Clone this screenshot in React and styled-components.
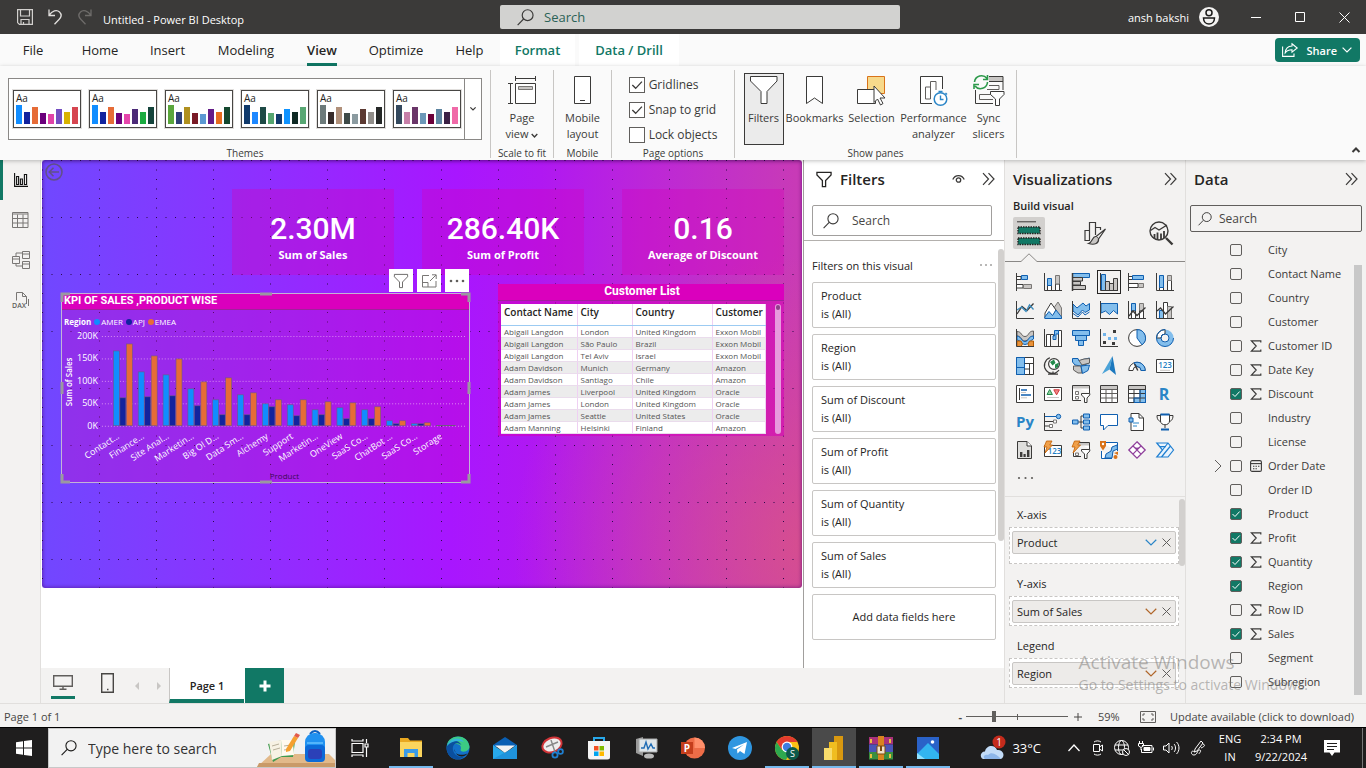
import React from "react";
import styled, { createGlobalStyle } from "styled-components";

const ink = "#3b3a39";
const green = "#117865";
const blue = "#83beec";
const deep = "#0f5fb0";
const grey = "#c8c6c4";

const Global = createGlobalStyle`
  *, *::before, *::after { box-sizing: border-box; }
  body { margin: 0; font-family: "Open Sans", "Noto Sans", sans-serif; font-size: 12px; color: #252423; background: #f3f2f1; }
  button, input { font: inherit; color: inherit; border: 0; background: none; padding: 0; margin: 0; border-radius: 0; }
  h1, h2, h3, p, ul { margin: 0; padding: 0; font: inherit; }
  li { list-style: none; }
  svg { display: block; flex: none; overflow: visible; }
`;

const Root = styled.div`
  display: flex;
  flex-direction: column;
  min-height: 100vh;
  position: relative;
  overflow: hidden;
`;

/* ---------- title bar ---------- */
const TitleBar = styled.header`
  display: grid;
  grid-template-columns: minmax(0, 500fr) 400px minmax(0, 466fr);
  align-items: center;
  height: 34px;
  background: #3b3a39;
  color: #fff;
`;
const QuickAccess = styled.div`
  display: flex;
  align-items: center;
  gap: 14px;
  padding-left: 17px;
`;
const DocTitle = styled.h1`
  font-size: 11px;
  line-height: 16px;
  padding-top: 6px;
  margin-left: -4px;
`;
const IconButton = styled.button`
  display: grid;
  place-items: center;
  width: ${(p) => p.$w || 16}px;
  height: ${(p) => p.$h || p.$w || 16}px;
  flex: none;
`;
const GlobalSearch = styled.label`
  display: flex;
  align-items: center;
  gap: 10px;
  height: 24px;
  padding-left: 17px;
  border-radius: 2px;
  background: #d2d2d0;
`;
const GlobalInput = styled.input`
  flex: 1;
  min-width: 0;
  outline: 0;
  font-size: 13px;
  &::placeholder { color: #2b6257; opacity: 1; }
`;
const WindowTools = styled.div`
  display: flex;
  justify-content: flex-end;
  align-items: center;
  font-size: 11px;
`;
const Account = styled.button`
  display: flex;
  align-items: center;
  gap: 10px;
  margin-right: 15px;
`;

/* ---------- ribbon ---------- */
const Tabs = styled.nav`
  display: flex;
  height: 32px;
  background: #fafafa;
`;
const Tab = styled.button`
  width: ${(p) => p.$w}px;
  margin-right: ${(p) => (p.$context ? 4 : 0)}px;
  font-size: 13px;
  line-height: 30px;
  color: ${(p) => (p.$context ? green : "#252423")};
  background: ${(p) => (p.$context ? "#fff" : "none")};
  font-weight: ${(p) => (p.$strong ? 600 : 400)};
`;
const TabText = styled.span`
  display: inline-block;
  height: 31px;
  border-bottom: 3px solid ${(p) => (p.$on ? green : "transparent")};
`;
const Share = styled.button`
  display: flex;
  align-items: center;
  gap: 8px;
  height: 24px;
  margin: 4px 6px 0 auto;
  padding: 0 8px 0 7px;
  border-radius: 4px;
  background: ${green};
  color: #fff;
  font-weight: 600;
  font-size: 11px;
`;
const ShareText = styled.span`
  display: flex;
  align-items: center;
  gap: 5px;
`;
const Ribbon = styled.section`
  display: flex;
  height: 94px;
  padding-top: 4px;
  background: #fafafa;
  box-shadow: 0 1px 4px rgba(0, 0, 0, 0.25);
  position: relative;
  z-index: 2;
`;
const Group = styled.div`
  display: flex;
  flex-direction: column;
  justify-content: space-between;
  align-items: center;
  width: ${(p) => p.$w}px;
  height: 88px;
  border-right: 1px solid #c8c6c4;
  padding: ${(p) => p.$pad || "3px 0 0"};
`;
const GroupName = styled.span`
  font-size: 10px;
  line-height: 10px;
  color: #3b3a39;
  white-space: nowrap;
`;
const Gallery = styled.div`
  display: flex;
  height: 62px;
  border: 1px solid #8a8886;
  background: #fff;
`;
const Thumbs = styled.div`
  display: flex;
  align-items: center;
  gap: 8px;
  padding: 0 3px 0 4px;
  border-right: 1px solid #8a8886;
`;
const Thumb = styled.button`
  display: flex;
  flex-direction: column;
  justify-content: space-between;
  width: 68px;
  height: 38px;
  padding: 1px 2px 3px;
  border: 1px solid #484644;
  outline: 1px solid #e1dfdd;
  background: #fff;
  font-size: 10px;
  line-height: 12px;
  text-align: left;
`;
const ThumbBars = styled.span`
  display: flex;
  align-items: flex-end;
  gap: 2px;
  height: 19px;
`;
const ThumbBar = styled.span`
  width: 6px;
  height: ${(p) => p.$h}px;
  background: ${(p) => p.$c};
`;
const RibbonRow = styled.div`
  display: flex;
  gap: 2px;
`;
const RibbonButton = styled.button`
  display: flex;
  flex-direction: column;
  align-items: center;
  gap: 3px;
  width: ${(p) => p.$w}px;
  height: 72px;
  padding-top: 1px;
  font-size: 11px;
  line-height: 16px;
  white-space: pre;
  color: #3b3a39;
  border: 1px solid ${(p) => (p.$on ? "#3b3a39" : "transparent")};
  background: ${(p) => (p.$on ? "#ebebeb" : "none")};
`;
const InlineCaret = styled.svg`
  display: inline-block;
  width: 7px;
  height: 5px;
`;
const Options = styled.div`
  display: flex;
  flex-direction: column;
  gap: 9px;
  padding-top: 4px;
`;
const Option = styled.label`
  display: flex;
  align-items: center;
  gap: 4px;
  font-size: 12px;
  line-height: 16px;
  white-space: nowrap;
  color: #3b3a39;
`;
const TickWrap = styled.span`
  display: grid;
  place-items: center;
  width: ${(p) => p.$s}px;
  height: ${(p) => p.$s}px;
  flex: none;
  & > * { grid-area: 1 / 1; }
  & > svg { pointer-events: none; }
`;
const TickInput = styled.input`
  appearance: none;
  width: ${(p) => p.$s}px;
  height: ${(p) => p.$s}px;
  border: 1px solid #605e5c;
  border-radius: ${(p) => (p.$solid ? 2 : 0)}px;
  background: ${(p) => (p.$solid ? "none" : "#fff")};
  &:checked { background: ${(p) => (p.$solid ? green : "#fff")}; }
`;
const Collapse = styled.div`
  display: flex;
  align-items: flex-end;
  margin-left: auto;
  padding: 0 3px 3px 0;
`;

function Tick({ id, on, size, solid }) {
  return (
    <TickWrap $s={size}>
      <TickInput type="checkbox" id={id} defaultChecked={on} $s={size} $solid={solid} />
      {on && (
        <svg width={size} height={size} viewBox="0 0 12 12" fill="none" stroke={solid ? "#fff" : ink} strokeWidth="1">
          <path d="M2.5 6 L5 8.5 L9.7 3.5" />
        </svg>
      )}
    </TickWrap>
  );
}

/* ---------- workspace ---------- */
const Work = styled.main`
  display: flex;
  flex: 1;
  min-height: 0;
`;
const Rail = styled.nav`
  display: flex;
  flex-direction: column;
  width: 41px;
  flex: none;
  border-right: 1px solid #e1dfdd;
`;
const RailButton = styled.button`
  display: grid;
  place-items: center;
  height: 40px;
  border-left: 3px solid ${(p) => (p.$on ? green : "transparent")};
  padding-right: 2px;
`;
const Center = styled.div`
  display: flex;
  flex-direction: column;
  flex: 1;
  min-width: 0;
`;
const Stage = styled.div`
  display: flex;
  flex: 1;
  background: #fff;
`;
const CanvasArea = styled.div`
  flex: 1;
  min-width: 0;
  padding: 0 1px;
`;
const Page = styled.div`
  position: relative;
  height: 428px;
  overflow: hidden;
  border-radius: 3px;
  background:
    radial-gradient(circle at 100% 90%, rgba(222, 90, 120, 0.6) 0%, rgba(222, 90, 120, 0) 34%),
    linear-gradient(91deg, #7048ff 0%, #8339ff 18%, #9628ff 36%, #a816ff 54%, #b018f2 65%, #bd28d6 80%, #c93cb4 100%);
  box-shadow: inset 0 0 4px rgba(70, 0, 110, 0.7);
`;
const GridDots = styled.svg`
  position: absolute;
  inset: 0;
  width: 100%;
  height: 100%;
`;
const BackButton = styled.button`
  position: absolute;
  left: 3px;
  top: 3px;
`;
const Visual = styled.section`
  position: absolute;
  left: ${(p) => p.$x}px;
  top: ${(p) => p.$y}px;
  width: ${(p) => p.$w}px;
  height: ${(p) => p.$h}px;
  background: ${(p) => p.$bg};
`;
const Kpi = styled(Visual)`
  display: flex;
  flex-direction: column;
  align-items: center;
  padding-top: 21px;
  color: #fff;
`;
const KpiValue = styled.span`
  font: 500 30px/37px Roboto, sans-serif;
`;
const KpiName = styled.span`
  font-size: 11px;
  font-weight: 700;
  line-height: 15px;
`;
const VisualTitle = styled.h2`
  height: ${(p) => p.$h}px;
  padding-left: 2px;
  background: #da00bd;
  border-bottom: 1px solid #a0219c;
  color: #fff;
  font: 700 ${(p) => p.$s}px/14px Roboto, sans-serif;
  text-align: ${(p) => p.$align || "left"};
`;
const ChartFrame = styled(Visual)`
  border: 1px solid #c3b3d6;
`;
const LegendRow = styled.div`
  display: flex;
  align-items: center;
  gap: 3px;
  height: 18px;
  padding: 5px 0 0 2px;
  color: #fff;
  font-size: 8px;
  line-height: 12px;
`;
const LegendItem = styled.span`
  display: flex;
  align-items: center;
  gap: 1px;
  &::before {
    content: "";
    width: 6px;
    height: 6px;
    border-radius: 50%;
    background: ${(p) => p.$c};
  }
`;
const Handles = styled.svg`
  position: absolute;
  left: -2px;
  top: -2px;
`;
const VisualTools = styled.div`
  position: absolute;
  left: 347px;
  top: 109px;
  display: flex;
  gap: 4px;
`;
const VisualTool = styled.button`
  display: grid;
  place-items: center;
  width: 24px;
  height: 23px;
  background: #fff;
`;
const TableBody = styled.div`
  display: flex;
  gap: 9px;
  padding: 3px 3px 0;
`;
const CustomerTable = styled.table`
  width: 264px;
  table-layout: fixed;
  border-collapse: collapse;
  background: #fff;
  th, td {
    padding: 0 0 0 3px;
    text-align: left;
    white-space: nowrap;
    overflow: hidden;
    border-right: 1px solid #efd0f3;
  }
  th {
    height: 21px;
    font-size: 10px;
    font-weight: 600;
    line-height: 17px;
    vertical-align: top;
    border-bottom: 1px solid #9ccbf2;
  }
  td {
    height: 12px;
    font-size: 8px;
    line-height: 11px;
    color: #555;
    border-bottom: 1px solid #eadcec;
  }
  tbody tr:nth-child(even) { background: #ececec; }
`;
const TableScroll = styled.div`
  width: 6px;
  height: 130px;
  border-radius: 3px;
  background: #e79add;
  &::before {
    content: "";
    display: block;
    width: 4px;
    height: 5px;
    margin: 1px;
    border-radius: 2px;
    background: #8f3f8b;
  }
`;

/* ---------- panes ---------- */
const FilterPane = styled.aside`
  width: 201px;
  flex: none;
  border-left: 1px solid #a19f9d;
  background: #fff;
`;
const PaneHead = styled.div`
  display: flex;
  align-items: center;
  gap: ${(p) => p.$gap || 0}px;
  height: 38px;
  padding: ${(p) => p.$pad};
`;
const PaneTitle = styled.h2`
  flex: 1;
  font-size: 15px;
  font-weight: 600;
  line-height: 20px;
`;
const PaneSearch = styled.label`
  display: flex;
  align-items: center;
  gap: ${(p) => p.$gap}px;
  height: ${(p) => p.$h}px;
  margin: ${(p) => p.$m};
  padding: 0 ${(p) => p.$px}px;
  border: 1px solid ${(p) => p.$c};
  border-radius: 2px;
`;
const PaneInput = styled.input`
  flex: 1;
  min-width: 0;
  outline: 0;
  font-size: 12px;
  &::placeholder { color: #484644; opacity: 1; }
`;
const FilterBody = styled.div`
  display: flex;
  justify-content: space-between;
  border-top: 1px solid #b3b0ad;
`;
const FilterList = styled.div`
  display: flex;
  flex-direction: column;
  flex: 1;
  gap: 6px;
  padding: 13px 2px 0 8px;
`;
const FilterHead = styled.div`
  display: flex;
  justify-content: space-between;
  align-items: center;
  height: 22px;
  padding-right: 3px;
  font-size: 11px;
`;
const FilterCard = styled.button`
  display: block;
  height: 46px;
  padding: 0 8px;
  border: 1px solid #c8c6c4;
  border-radius: 2px;
  background: #fff;
  text-align: ${(p) => (p.$center ? "center" : "left")};
  font-size: 11px;
  line-height: 18px;
`;
const Bar = styled.div`
  width: ${(p) => p.$w}px;
  height: ${(p) => p.$h}px;
  margin-top: ${(p) => p.$top}px;
  flex: none;
  border-radius: ${(p) => p.$r || 0}px;
  background: ${(p) => p.$c || "#d2d0ce"};
`;
const SidePane = styled.aside`
  display: flex;
  flex-direction: column;
  width: 181px;
  flex: none;
  border-left: 1px solid #e1dfdd;
`;
const Sub = styled.h3`
  padding-left: 8px;
  font-size: 11px;
  font-weight: 600;
  line-height: 16px;
`;
const Modes = styled.div`
  display: flex;
  justify-content: space-between;
  height: 35px;
  padding: 3px 8px 0;
`;
const Mode = styled.button`
  display: grid;
  place-items: center;
  width: 32px;
  height: 32px;
  border-radius: 2px;
  background: ${(p) => (p.$on ? "#d2d0ce" : "none")};
`;
const Notch = styled.div`
  display: flex;
  height: 13px;
  align-items: flex-end;
  &::before { content: ""; width: 16px; border-bottom: 1px solid #8a8886; }
  &::after { content: ""; flex: 1; border-bottom: 1px solid #8a8886; }
`;
const VisualGrid = styled.div`
  display: grid;
  grid-template-columns: repeat(6, 24px);
  grid-auto-rows: 24px;
  gap: 4px;
  padding: 8px 0 6px 8px;
`;
const VisualPick = styled.button`
  display: grid;
  place-items: center;
  border: 1px solid ${(p) => (p.$on ? "#252423" : "transparent")};
`;
const WellArea = styled.div`
  display: flex;
  flex: 1;
  border-top: 1px solid #e1dfdd;
`;
const Wells = styled.div`
  flex: 1;
  padding: 0 0 0 4px;
`;
const WellName = styled.h3`
  padding: ${(p) => p.$top}px 0 4px 8px;
  line-height: 17px;
  font-size: 11px;
`;
const Well = styled.div`
  height: ${(p) => p.$h}px;
  padding: 3px 2px;
  border: 1px dashed #c8c6c4;
  background: #fff;
`;
const Pill = styled.div`
  display: flex;
  align-items: center;
  gap: 3px;
  height: 23px;
  padding: 0 2px 0 4px;
  border: 1px solid #c8c6c4;
  border-radius: 2px;
  background: #edebe9;
  font-size: 11px;
  line-height: 20px;
`;
const PillText = styled.span`
  flex: 1;
`;
const DataBody = styled.div`
  display: flex;
  flex: 1;
  padding-right: 4px;
`;
const Fields = styled.ul`
  flex: 1;
  padding-top: 6px;
`;
const Field = styled.li`
  display: grid;
  grid-template-columns: 12px 12px 10px 1fr;
  column-gap: 8px;
  align-items: center;
  height: 24px;
  padding-left: 24px;
  color: #3b3a39;
`;
const Expander = styled.button`
  display: flex;
  justify-content: flex-end;
`;
const FieldName = styled.label`
  font-size: 11px;
  line-height: 16px;
  white-space: nowrap;
`;
const Watermark = styled.div`
  position: absolute;
  right: 58px;
  bottom: 74px;
  color: rgba(120, 118, 116, 0.5);
  font-size: 14px;
  line-height: 19px;
  pointer-events: none;
`;
const WatermarkHead = styled.p`
  font-size: 19px;
  line-height: 26px;
`;

/* ---------- page tabs and status ---------- */
const PageTabs = styled.div`
  display: flex;
  align-items: stretch;
  height: 35px;
  background: #f3f2f1;
`;
const ViewSwitch = styled.button`
  display: flex;
  flex-direction: column;
  align-items: center;
  justify-content: space-between;
  width: 24px;
  margin: 3px 0 4px ${(p) => p.$left}px;
  border-bottom: 3px solid ${(p) => (p.$on ? green : "transparent")};
`;
const PageArrows = styled.div`
  display: flex;
  align-items: center;
  gap: 16px;
  padding: 0 7px 0 14px;
`;
const PageTab = styled.button`
  width: 75px;
  padding-top: 4px;
  border-left: 1px solid #c8c6c4;
  border-bottom: 4px solid ${green};
  background: #fff;
  font-size: 11px;
  font-weight: 600;
`;
const AddPage = styled.button`
  display: grid;
  place-items: center;
  width: 40px;
  border-left: 1px solid #fff;
  background: ${green};
`;
const Status = styled.footer`
  display: flex;
  align-items: center;
  height: 25px;
  padding: 2px 4px 0;
  border-top: 1px solid #e1dfdd;
  border-bottom: 1px solid #000;
  font-size: 11px;
  color: #484644;
`;
const StatusRight = styled.div`
  display: flex;
  align-items: center;
  gap: 14px;
  margin-left: auto;
`;
const Zoom = styled.div`
  display: flex;
  align-items: center;
  gap: 4px;
`;
const ZoomValue = styled.output`
  width: 28px;
`;
const ZoomRange = styled.input`
  appearance: none;
  width: 102px;
  height: 12px;
  background: linear-gradient(#605e5c, #605e5c) 50% 50% / 1px 6px no-repeat,
    linear-gradient(#605e5c, #605e5c) 0 50% / 100% 1px no-repeat;
  &::-webkit-slider-thumb {
    appearance: none;
    width: 4px;
    height: 11px;
    background: #605e5c;
  }
`;
const StatusLink = styled.a`
  min-width: 192px;
  color: inherit;
  text-decoration: none;
`;

/* ---------- taskbar ---------- */
const Taskbar = styled.footer`
  display: flex;
  align-items: stretch;
  height: 40px;
  background: #1f1e1e;
  color: #fff;
`;
const Start = styled.button`
  display: grid;
  place-items: center;
  width: 48px;
`;
const TaskSearch = styled.label`
  display: flex;
  align-items: center;
  gap: 11px;
  width: 288px;
  padding-left: 12px;
  border: 1px solid #c8c8c8;
  background: #f2f2f2;
  color: #252423;
`;
const TaskInput = styled.input`
  flex: 1;
  min-width: 0;
  outline: 0;
  font-size: 14px;
  &::placeholder { color: #333; opacity: 1; }
`;
const Apps = styled.div`
  display: flex;
`;
const AppButton = styled.button`
  display: grid;
  place-items: center;
  width: ${(p) => p.$w || 44}px;
  margin: 0 ${(p) => (p.$w ? 4 : 2)}px 0 ${(p) => (p.$w ? 0 : 1)}px;
  padding-top: 2px;
  border-bottom: 2px solid ${(p) => (p.$run ? "#76b9ed" : "transparent")};
  background: ${(p) => (p.$on ? "#4a4a4a" : "none")};
`;
const Tray = styled.div`
  display: flex;
  align-items: center;
  gap: 8px;
  margin-left: auto;
`;
const Weather = styled.button`
  display: flex;
  align-items: center;
  gap: 6px;
  margin-right: 17px;
  font-size: 13px;
`;
const TrayText = styled.div`
  width: ${(p) => p.$w}px;
  font-size: 11px;
  line-height: 18px;
  text-align: center;
  white-space: nowrap;
`;
const ShowDesktop = styled.button`
  align-self: stretch;
  width: 4px;
  margin-left: 8px;
  border-left: 1px solid #777;
`;

/* ---------- shared glyphs ---------- */
const Lens = ({ s = 16, c = ink }) => (
  <svg width={s} height={s} viewBox="0 0 16 16" fill="none" stroke={c} strokeWidth="1.1">
    <circle cx="10" cy="5.8" r="5.1" />
    <path d="M6.2 9.4 L0.6 15.2" />
  </svg>
);
const Chevrons = () => (
  <svg width="13" height="14" viewBox="0 0 13 14" fill="none" stroke={ink} strokeWidth="1.2">
    <path d="M1 1.2 L6.5 7 L1 12.8 M6.5 1.2 L12 7 L6.5 12.8" />
  </svg>
);
const Down = ({ w = 10, c = ink, sw = 1.2 }) => (
  <svg width={w} height={w * 0.6} viewBox="0 0 10 6" fill="none" stroke={c} strokeWidth={sw}>
    <path d="M0.6 0.6 L5 5 L9.4 0.6" />
  </svg>
);
const Funnel = ({ w, h, c = ink, sw = 1, fill = "none" }) => (
  <svg width={w} height={h} viewBox="0 0 28 28" fill={fill} stroke={c} strokeWidth={sw}>
    <path d="M0.8 0.8 H27.2 V5.5 L17 16 V27.2 H11 V16 L0.8 5.5 Z" />
  </svg>
);
const Sigma = () => (
  <svg width="12" height="12" viewBox="0 0 12 12" fill="none" stroke={ink} strokeWidth="1.2">
    <path d="M10.8 2.6 V0.8 H1.4 L6.2 6 L1.4 11.2 H10.8 V9.4" />
  </svg>
);
const Dots = ({ w = 16, r = 1, c = "#605e5c" }) => (
  <svg width={w} height="4" viewBox={`0 0 ${w} 4`} fill={c}>
    <circle cx="2" cy="2" r={r} />
    <circle cx={w / 2} cy="2" r={r} />
    <circle cx={w - 2} cy="2" r={r} />
  </svg>
);

/* ---------- data ---------- */
const tabs = [
  ["File", 66], ["Home", 68], ["Insert", 67], ["Modeling", 90], ["View", 62, "on"],
  ["Optimize", 86], ["Help", 61], ["Format", 75, "ctx"], ["Data / Drill", 100, "ctx"],
];
const barHeights = [19, 12, 17, 11, 10, 15, 12, 17];
const themes = [
  ["#118dff", "#12239e", "#e66c37", "#6b007b", "#e044a7", "#744ec2", "#d9b300", "#d64550"],
  ["#118dff", "#12239e", "#e66c37", "#6b007b", "#e645ab", "#4c2a78", "#1aab40", "#15443c"],
  ["#5ba63c", "#2f3f78", "#b0901f", "#7a1a26", "#5b98d2", "#641c88", "#e66c1e", "#15482f"],
  ["#113a6b", "#1e88ff", "#1e4a45", "#56a56f", "#113a6b", "#0f93ff", "#0f2a24", "#58a773"],
  ["#6c7a7a", "#362b2a", "#b0907a", "#3e4a48", "#8b9ba0", "#5c3a32", "#918e8a", "#252827"],
  ["#34495e", "#c77fa8", "#6a3568", "#6c98b8", "#6b0038", "#5c84a0", "#3c2145", "#f06aa8"],
];
const products = ["Contact...", "Finance...", "Site Anal...", "Marketin...", "Big Ol D...", "Data Sm...", "Alchemy", "Support", "Marketin...", "OneView", "SaaS Co...", "ChatBot ...", "SaaS Co...", "Storage"];
const series = [
  { name: "AMER", color: "#118dff", v: [75, 54, 51, 37, 26, 31, 22, 21, 16, 18, 16, 5, 2, 0.4] },
  { name: "APJ", color: "#12239e", v: [28, 29, 30, 20, 11, 11, 19, 10, 11, 7, 7, 2, 2, 0.4] },
  { name: "EMEA", color: "#e66c37", v: [82, 70, 67, 44, 48, 33, 26, 26, 24, 23, 19, 5, 3, 0.4] },
];
const customers = [
  ["Abigail Langdon", "London", "United Kingdom", "Exxon Mobil"],
  ["Abigail Langdon", "São Paulo", "Brazil", "Exxon Mobil"],
  ["Abigail Langdon", "Tel Aviv", "Israel", "Exxon Mobil"],
  ["Adam Davidson", "Munich", "Germany", "Amazon"],
  ["Adam Davidson", "Santiago", "Chile", "Amazon"],
  ["Adam James", "Liverpool", "United Kingdom", "Oracle"],
  ["Adam James", "London", "United Kingdom", "Oracle"],
  ["Adam James", "Seattle", "United States", "Oracle"],
  ["Adam Manning", "Helsinki", "Finland", "Amazon"],
];
const filters = ["Product", "Region", "Sum of Discount", "Sum of Profit", "Sum of Quantity", "Sum of Sales"];
const fields = [
  ["City"], ["Contact Name"], ["Country"], ["Customer"], ["Customer ID", "sum"], ["Date Key", "sum"],
  ["Discount", "sum", true], ["Industry"], ["License"], ["Order Date", "date"], ["Order ID"], ["Product", "", true],
  ["Profit", "sum", true], ["Quantity", "sum", true], ["Region", "", true], ["Row ID", "sum"], ["Sales", "sum", true],
  ["Segment"], ["Subregion"],
];

const Axis = () => <path d="M0.5 0 V17.5 H18" fill="none" stroke={ink} />;
const W = "#fff";
const visuals = [
  ["Stacked bar chart", <><path d="M0.5 3.5 H5 V6.5 H0.5 M0.5 11.5 H7 V15 H0.5" fill={W} stroke={ink} /><path d="M5.5 2.5 H11.5 V6.5 H5.5 Z" fill={blue} stroke={deep} /><path d="M7.5 11.5 H15.5 V15.5 H7.5 Z" fill={grey} stroke="#797775" /><path d="M0.5 0 V18" stroke={ink} /></>],
  ["Stacked column chart", <><path d="M3.5 12 V17.5 H7.5 V12 Z M11.5 11 V17.5 H15.5 V11 Z" fill={W} stroke={ink} /><path d="M3.5 5.5 H7.5 V12.5 H3.5 Z" fill={blue} stroke={deep} /><path d="M11.5 2.5 H15.5 V11 H11.5 Z" fill={grey} stroke="#797775" /><Axis /></>],
  ["Clustered bar chart", <><path d="M0.5 0.5 H17.5 V4.5 H0.5 Z" fill={blue} stroke={deep} /><path d="M0.5 4.5 H10.5 V8 H0.5 Z M0.5 8.5 H8.5 V12 H0.5 Z M0.5 12.5 H13.5 V16.5 H0.5 Z" fill={grey} stroke={ink} /><path d="M0.5 0 V18" stroke={ink} strokeWidth="1.5" /></>],
  ["Clustered column chart", <><path d="M1.5 1.5 H5.5 V17.5 H1.5 Z" fill={blue} stroke={deep} /><path d="M5.5 8.5 H9.5 V17.5 H5.5 Z M9.5 10.5 H13.5 V17.5 H9.5 Z M13.5 5.5 H17.5 V17.5 H13.5 Z" fill={grey} stroke={ink} /><path d="M0.5 0 V17.5 H18" fill="none" stroke={ink} /></>],
  ["100% stacked bar chart", <><path d="M0.5 3.5 H5 V6.5 H0.5 M0.5 10.5 H10 V14.5 H0.5" fill={W} stroke={ink} /><path d="M4.5 2.5 H15.5 V6.5 H4.5 Z" fill={blue} stroke={deep} /><path d="M10.5 10.5 H15.5 V14.5 H10.5 Z" fill={grey} stroke="#797775" /><path d="M0.5 0 V18" stroke={ink} /></>],
  ["100% stacked column chart", <><path d="M3.5 12 V17.5 H7.5 V12 Z M11.5 7.5 V17.5 H15.5 V7.5 Z" fill={W} stroke={ink} /><path d="M3.5 2.5 H7.5 V14.5 H3.5 Z" fill={blue} stroke={deep} /><path d="M11.5 2.5 H15.5 V7.5 H11.5 Z" fill={grey} stroke="#797775" /><Axis /></>],
  ["Line chart", <><path d="M1 13 L6 5.5 L11 9.5 L17.5 2.5" fill="none" stroke={ink} strokeWidth="1.3" /><path d="M1 9 L5.5 6 L10 10.5 L13.5 4 L17.5 8.5" fill="none" stroke="#3a8bbd" strokeWidth="1.3" /><Axis /></>],
  ["Area chart", <><path d="M7 11 L14 1 L17.5 7 V17.5 H7 Z" fill={grey} stroke="#797775" /><path d="M1 12 L7 2 L12 9 L8 17 H1 Z" fill={W} stroke={ink} /><path d="M0.8 16 L5 10.5 L8.5 14.5 L12 9 L17.5 16 V17.5 H0.8 Z" fill={blue} stroke={deep} /></>],
  ["Stacked area chart", <><path d="M1 3 L5 7 L11 2 L14 5 L17.5 2.5 V9 L13 11.5 L10.5 9 L6 14 L1 10 Z" fill={blue} stroke={deep} /><path d="M1 12.5 L6 16 L10.5 11 L13 14 L17.5 11" fill="none" stroke={deep} /><Axis /></>],
  ["100% stacked area chart", <><path d="M1 2.5 H17.5 V13 L13.5 9.5 L9.5 13.5 L5.5 10 L1 12 Z" fill={blue} stroke={deep} /><Axis /></>],
  ["Line and stacked column chart", <><path d="M3.5 2.5 H7.5 V10 H3.5 Z" fill={blue} stroke={deep} /><path d="M11.5 2.5 H15.5 V10 H11.5 Z" fill={grey} stroke="#797775" /><path d="M3.5 10 H7.5 V17.5 H3.5 Z M11.5 10 H15.5 V17.5 H11.5 Z" fill={W} stroke={ink} /><path d="M1 15 L5 10 L9 14.5 L17.5 6.5" fill="none" stroke={ink} strokeWidth="1.3" /><Axis /></>],
  ["Line and clustered column chart", <><path d="M3.5 9.5 H7.5 V17.5 H3.5 Z" fill={blue} stroke={deep} /><path d="M7.5 1.5 H11.5 V17.5 H7.5 Z" fill={W} stroke={ink} /><path d="M11.5 5.5 H15.5 V17.5 H11.5 Z" fill={grey} stroke="#797775" /><path d="M1 10 L4.5 7 L9.5 13 L17.5 5.5" fill="none" stroke={ink} strokeWidth="1.3" /><Axis /></>],
  ["Ribbon chart", <><path d="M1 2.5 C6 2.5 5 7.5 9 7.5 C13 7.5 12 2 17.5 2 V7 C13 7 13 12 9 12 C5 12 6 7 1 7 Z" fill={grey} stroke="#605e5c" /><path d="M1 7 C6 8 5 12.5 9 12.5 C13 12.5 12 7 17.5 7 V10 C14 11 13 15.5 9 15.5 C5 15.5 5 11 1 11 Z" fill={blue} stroke={deep} /><path d="M1 12 H5 L6.5 15 L5 17.5 H1 Z M17.5 12 H13.5 L12 15 L13 17.5 H17.5 Z" fill="#e8923a" stroke="#b35a00" /><Axis /></>],
  ["Waterfall chart", <><path d="M2.5 5.5 H6.5 V17.5 H2.5 Z M14.5 1.5 H17.5 V17.5 H14.5 Z" fill={W} stroke={ink} /><path d="M6.5 5.5 H9.5 V10.5" fill="none" stroke={ink} /><path d="M10.5 1.5 H14.5 V5 H12 V10.5 H9 V7 H10.5 Z" fill={blue} stroke={deep} /><Axis /></>],
  ["Funnel", <><path d="M0.5 1.5 H17.5 V6.5 H0.5 Z M3.5 6.5 H14.5 V11.5 H3.5 Z M6.5 11.5 H11.5 V16.5 H6.5 Z" fill={blue} stroke={deep} /></>],
  ["Scatter chart", <><path d="M3 12 h3 v3 h-3 Z M13 1 h3 v3 h-3 Z M12 13 h3 v3 h-3 Z" fill={ink} /><path d="M3 4 h3 v3 h-3 Z M8 8 h3 v3 h-3 Z M14 8 h3 v3 h-3 Z" fill="#6fb3ea" /><Axis /></>],
  ["Pie chart", <><circle cx="9" cy="9" r="8.4" fill={W} stroke={ink} /><path d="M9 9 V0.6 A8.4 8.4 0 0 1 14 15.8 Z" fill={blue} stroke={deep} /></>],
  ["Donut chart", <><circle cx="9" cy="9" r="6.4" fill="none" stroke={blue} strokeWidth="4.4" /><path d="M9 0.6 A8.4 8.4 0 0 0 0.6 9 H5 A4 4 0 0 1 9 5 Z" fill={W} stroke={ink} /><circle cx="9" cy="9" r="8.5" fill="none" stroke={deep} strokeDasharray="40 14" /><circle cx="9" cy="9" r="4" fill="none" stroke={deep} /></>],
  ["Treemap", <><path d="M0.5 0.5 H17.5 V17.5 H0.5 Z" fill={W} stroke={ink} /><path d="M0.5 0.5 H8.5 V17.5 H0.5 Z" fill={blue} stroke={deep} /><path d="M0.5 10.5 H8.5" stroke={deep} /><path d="M8.5 6.5 H17.5 M13.5 6.5 V17.5 M8.5 12 H13.5" stroke={ink} fill="none" /></>],
  ["Map", <><circle cx="10" cy="7" r="5.4" fill={W} stroke={ink} strokeWidth="1.2" /><path d="M6 5 L10 2.5 L11.5 6 L8.5 8.5 Z M11 7.5 L15 5.5 L14 10 L11 11.5 Z" fill="#238a4b" /><path d="M6 0.8 A8 8 0 1 0 15 13 M9 14.5 V17 M4 17.2 H14" fill="none" stroke={ink} strokeWidth="1.2" /></>],
  ["Filled map", <><path d="M0.5 1.5 L6 1.5 L7 4 L11 2.5 L17.5 1 V6 L9 9 L3 8 L0.5 5 Z" fill={blue} stroke={deep} /><path d="M7 3.5 L12 2 L17.5 1.5 V6 L10 8 Z" fill={grey} stroke="#605e5c" /><path d="M1.5 9 L9 9 L10 16 L6 16 L1.5 13 Z" fill={grey} stroke="#605e5c" /><path d="M9 9 L17.5 8 L16 13.5 L10.5 16.5 Z" fill={blue} stroke={deep} /></>],
  ["Azure map", <><path d="M12.5 -1 L2 17 L9.5 12.5 Z" fill="#4ba3d8" /><path d="M12.5 -1 L9.5 12.5 L16 18 Z" fill="#1b78be" /></>],
  ["Gauge", <><path d="M0.8 13.5 A8.2 8.2 0 0 1 17.2 13.5 H13 A4 4 0 0 0 5 13.5 Z" fill={W} stroke={ink} /><path d="M6 5.8 A8.2 8.2 0 0 1 17.2 13.5 H13 A4 4 0 0 0 9 9.5 Z" fill={blue} stroke={deep} /><path d="M6.5 7 L9.8 13.5" stroke={ink} strokeWidth="1.5" /></>],
  ["Card", <><path d="M0.5 2.5 H17.5 V15.5 H0.5 Z" fill={W} stroke={ink} /><text x="9" y="11" fontSize="8" fontWeight="600" textAnchor="middle" fill="#1f7fc4">123</text><path d="M4 13.3 H14" stroke={grey} /></>],
  ["Multi-row card", <><path d="M0.5 0.5 H17.5 V17.5 H0.5 Z" fill={W} stroke={ink} /><path d="M3.5 3 V15" stroke={ink} /><path d="M5 5 H11 M5 10 H15" stroke={deep} strokeWidth="1.6" /><path d="M5 7.5 H10 M5 12.8 H11" stroke={grey} /></>],
  ["KPI", <><path d="M0.5 2.5 H17.5 V15.5 H0.5 Z" fill={W} stroke={ink} /><path d="M3 9.5 L5.7 4.5 L8.4 9.5 Z" fill="#8fd19e" stroke="#238a4b" /><path d="M9.8 4.8 H15.4 L12.6 9.8 Z" fill="#f08a8a" stroke="#d13438" /><path d="M3 12.5 H15" stroke={grey} /></>],
  ["Slicer", <><path d="M0.5 0.5 H17.5 V8 M9 15.5 H0.5 V0.5" fill={W} stroke={ink} /><path d="M1 1 H17 V3.5 H1 Z" fill={grey} /><path d="M3.5 6.5 h3 v3 h-3 Z M3.5 11.5 h3 v2.5 h-3 Z" fill="none" stroke="#797775" /><path d="M9.5 8.5 H17.8 V10 L15 13 V17.5 H12.5 V13 L9.5 10 Z" fill={W} stroke={ink} /></>],
  ["Table", <><path d="M0.5 0.5 H17.5 V17.5 H0.5 Z" fill={W} stroke={ink} /><path d="M1 1 H17 V4 H1 Z" fill={grey} /><path d="M0.5 4.5 H17.5 M0.5 8.5 H17.5 M0.5 13 H17.5 M6 4.5 V17.5 M12 4.5 V17.5" stroke="#605e5c" /></>],
  ["Matrix", <><path d="M0.5 0.5 H17.5 V17.5 H0.5 Z" fill={W} stroke={ink} /><path d="M1 1 H17 V4 H1 Z" fill={grey} /><path d="M12 5 H17 V17 H6 V13 H12 Z" fill={blue} /><path d="M0.5 4.5 H17.5 M0.5 8.5 H17.5 M0.5 13 H17.5 M6 4.5 V17.5 M12 4.5 V17.5" stroke={ink} /><path d="M12 5 V13 H6 V17 M17.5 5 V17.5 H6" stroke={deep} fill="none" /></>],
  ["R script visual", <text x="8" y="15" fontSize="16" fontWeight="700" textAnchor="middle" fill="#2a85c7">R</text>],
  ["Python visual", <text x="9" y="14" fontSize="15" fontWeight="700" textAnchor="middle" fill="#2a85c7">Py</text>],
  ["Key influencers", <><Axis /><path d="M1 3.5 H12 " stroke={deep} /><circle cx="14.5" cy="3.5" r="2.2" fill={blue} stroke={deep} /><path d="M1 8.5 H9 M1 13 H5" stroke={ink} /><path d="M9.5 7 h3 v3 h-3 Z M5.5 11.5 h3 v3 h-3 Z" fill={W} stroke="#797775" /></>],
  ["Decomposition tree", <><path d="M6 9 H11 M9 3 V15 M9 3 H11 M9 15 H11" stroke={ink} fill="none" /><path d="M0.5 7 H6 V11 H0.5 Z M11.5 1 H17.5 V5 H11.5 Z M11.5 7 H17.5 V11 H11.5 Z M11.5 13 H17.5 V17 H11.5 Z" fill={blue} stroke={deep} /></>],
  ["Q&A", <path d="M0.5 1.5 H17.5 V12.5 H8 L3.5 17 V12.5 H0.5 Z" fill={W} stroke={deep} />],
  ["Smart narrative", <><path d="M3 0.5 H11 L15.5 5 V17.5 H3 Z" fill={W} stroke={ink} /><path d="M11 0.5 V5 H15.5" fill="none" stroke={ink} /><path d="M5 10 H11 M5 13 H9" stroke="#2a85c7" /><path d="M1 5 h4 v4 h-4 Z" fill={blue} stroke={deep} /></>],
  ["Goals", <><path d="M4.5 1.5 H13.5 V8 C13.5 13 4.5 13 4.5 8 Z" fill={W} stroke={ink} /><path d="M4.5 2.5 H1 C1 7 3 8 4.7 8.5 M13.5 2.5 H17 C17 7 15 8 13.3 8.5 M9 12 V15" fill="none" stroke={ink} /><path d="M4.5 1.5 H13.5 M5 16.5 H13" stroke={deep} strokeWidth="2" /></>],
  ["Paginated report", <><path d="M1.5 0.5 H11 L15.5 5 V17.5 H1.5 Z" fill="#dededc" stroke={ink} /><path d="M11 0.5 V5 H15.5" fill={W} stroke={ink} /><path d="M4 11 h2.4 v5 h-2.4 Z M7.5 13 h2.2 v3 h-2.2 Z M11 9 h2.4 v7 h-2.4 Z" fill={ink} /></>],
  ["Card (new)", <><path d="M0.5 4.5 H17.5 V15.5 H0.5 Z" fill={W} stroke={ink} /><text x="10.5" y="13" fontSize="8" fontWeight="600" textAnchor="middle" fill="#1f7fc4">123</text><path d="M2.5 0 H8 L5.8 4 H8.5 L1 12 L3 6 H0 Z" fill="#f0a04a" stroke="#c25e00" strokeWidth="0.8" /></>],
  ["Slicer (new)", <><path d="M6 1.5 H17.5 V8 M9 15.5 H1.5 V12" fill={W} stroke={ink} /><path d="M7 2 H17 V4.5 H7 Z" fill={grey} /><path d="M3.5 12 h3 v2.5 h-3 Z" fill="none" stroke="#797775" /><path d="M9.5 8.5 H17.8 V10 L15 13 V17.5 H12.5 V13 L9.5 10 Z" fill={W} stroke={ink} /><path d="M2.5 0 H8 L5.8 4 H8.5 L1 12 L3 6 H0 Z" fill="#f0a04a" stroke="#c25e00" strokeWidth="0.8" /></>],
  ["ArcGIS Maps", <><path d="M1 1.5 H17.5 V10 M12 17.5 H1.5 V10" fill={W} stroke={deep} /><path d="M17 4 L12 6 L11 10 L6 13 L5 17 H12 L13 10 L17.5 8 Z" fill={blue} stroke={deep} /><path d="M0 0 H6 V5 L3 9.5 L0 5 Z" fill="#d9731a" /><circle cx="3" cy="3" r="1.2" fill={W} /><path d="M14 12 L18 10.5 V14 Z" fill="#d9731a" /><circle cx="15.5" cy="16" r="2" fill="#d9731a" /></>],
  ["Power Apps", <path d="M9 0.8 L17.2 9 L9 17.2 L0.8 9 Z M4.9 4.9 L13.1 13.1 M13.1 4.9 L4.9 13.1 M6 6 C8 8 10 8 12 6" fill={W} stroke="#8f3f9b" strokeWidth="1.3" />],
  ["Power Automate", <path d="M0.8 2 H12 L17.5 9 L12 16 H0.8 L6.5 9 Z M3.8 5.7 H10 M1 16 L12 2 M5.5 16 L14.5 5" fill="#eaf4fd" stroke="#1f7fd1" strokeWidth="1.2" />],
];

/* ---------- taskbar app drawings ---------- */
const apps = [
  ["File Explorer", true, <><path d="M1 2 H9 L11 4.5 H23 V21 H1 Z" fill="#e9a820" /><path d="M1 6 H23 V21 H1 Z" fill="#fbd55e" /><path d="M5 13 H19 V21 H15.5 V17 H8.5 V21 H5 Z" fill="#3b9be8" /></>],
  ["Edge", false, <><circle cx="12" cy="12" r="11.5" fill="#1371c9" /><path d="M1 9 C3 -2 22 -3 23.5 11 C23 16 15 17 14.5 14 C15.5 12 15 8 10.5 8 C5 8 1 11 1 9 Z" fill="#3ccb83" /><path d="M0.6 11 C2 4 12 2 15.5 9 C10 4.5 6 9 7 14 C8 19 13 22 18.5 20.5 C12 26 0.5 23 0.6 11 Z" fill="#0a4f9e" /><path d="M1 10 C3 2 14 0 18 6 C12 4 5 5 1 10 Z" fill="#35b6d8" /><path d="M8.5 13 C8 19 16 20 21.5 17.5 C18 22 10 22 8.5 13 Z" fill="#1f1e1e" /></>],
  ["Mail", false, <><path d="M0 9 L12 1 L24 9 V11 H0 Z" fill="#0a5fb3" /><path d="M0 9 L12 17 L24 9 V23 H0 Z" fill="#28a8ea" /><path d="M2 9.5 H22 L12 17 Z" fill="#f3f3f3" /><path d="M0 23 L24 10 V23 Z" fill="#1b8ad6" opacity=".7" /></>],
  ["Snipping Tool", false, <><ellipse cx="12" cy="9" rx="10" ry="7" fill="#eee" stroke="#d13438" strokeWidth="2" transform="rotate(-22 12 9)" /><path d="M6 11 L18 6 M11 4 L15 16" stroke="#888" strokeWidth="1.4" /><circle cx="15" cy="19" r="2.6" fill="none" stroke="#1f7fd1" strokeWidth="1.8" /><circle cx="20.5" cy="15.5" r="2.4" fill="none" stroke="#1f7fd1" strokeWidth="1.8" /></>],
  ["Store", false, <><path d="M7 6 V2 H17 V6" fill="none" stroke="#28a8ea" strokeWidth="2" /><path d="M1 5 H23 V21 Q23 23.5 20.5 23.5 H3.5 Q1 23.5 1 21 Z" fill="#f5f5f5" /><path d="M7 10 h4.5 v4.5 h-4.5 Z" fill="#f25022" /><path d="M12.5 10 h4.5 v4.5 h-4.5 Z" fill="#7fba00" /><path d="M7 15.5 h4.5 v4.5 h-4.5 Z" fill="#00a4ef" /><path d="M12.5 15.5 h4.5 v4.5 h-4.5 Z" fill="#ffb900" /></>],
  ["Performance Monitor", false, <><path d="M2 3 L9 1 V20 L2 17 Z" fill="#9a9a9a" /><path d="M5 3 H23 V16 H5 Z" fill="#dfe6ea" stroke="#aaa" /><path d="M7 12 L10 12 L12 6 L14 13 L17 8 L19 12 H21" fill="none" stroke="#1f6cb5" strokeWidth="1.4" /><ellipse cx="15" cy="20" rx="5" ry="2.6" fill="#bbb" /></>],
  ["PowerPoint", false, <><circle cx="13.5" cy="12" r="10.5" fill="#ed6c47" /><path d="M13.5 1.5 A10.5 10.5 0 0 1 24 12 H13.5 Z" fill="#ff8f6b" /><path d="M0 6 H12 V18 H0 Z" fill="#c43e1c" /><text x="6" y="16" fontSize="10" fontWeight="700" textAnchor="middle" fill="#fff">P</text></>],
  ["Telegram", false, <><circle cx="12" cy="12" r="12" fill="#2f96e0" /><path d="M4 12 L19 6 L16.5 18 L12 15 L9.5 17.5 L9 13.5 L16 8.5 L7.5 13 Z" fill="#fff" /></>],
  ["Chrome", true, <><circle cx="12" cy="12" r="12" fill="#fbc116" /><path d="M1.6 6 A12 12 0 0 1 22.4 6 H12 L7 14 Z" fill="#e33b2e" /><path d="M1.6 6 A12 12 0 0 0 11 24 L16 14 L12 15 L7 14 Z" fill="#2da94f" /><circle cx="12" cy="11" r="5.4" fill="#fff" /><circle cx="12" cy="11" r="4.2" fill="#3f7de0" /><circle cx="17.5" cy="17.5" r="6.5" fill="#0c5a4a" /><text x="17.5" y="21" fontSize="9" textAnchor="middle" fill="#fff">S</text></>],
  ["Power BI", true, <><path d="M12 0 H21 V24 H12 Z" fill="#d9980f" /><path d="M7 6 H15 V24 H7 Z" fill="#f0bd20" /><path d="M2 12 H10 V24 H2 Z" fill="#f8dc6c" /></>, true],
  ["WinRAR", true, <><path d="M0 1 H24 V8.5 H0 Z" fill="#a8327a" /><path d="M0 8.5 H24 V16 H0 Z" fill="#4a55b8" /><path d="M0 16 H24 V23.5 H0 Z" fill="#3a8f3f" /><path d="M9 0 H15 V24 H9 Z" fill="#d9841f" /><path d="M8 10 H16 V18 H8 Z" fill="#f0e0c8" stroke="#7a4a10" /><path d="M12 10 V15" stroke="#7a4a10" strokeWidth="2" /><path d="M2 3 V7 M21 3 V7 M2 18 V22 M21 18 V22" stroke="#e8c040" strokeWidth="2" /></>],
  ["Photos", true, <><path d="M1 1 H23 V23 H1 Z" fill="#2a62c8" /><path d="M1 23 V18 L12 7 L23 18 V23 Z" fill="#32b4f0" /><path d="M9 23 L1 17 V23 Z" fill="#8fe0ff" /><circle cx="16.5" cy="6" r="1.8" fill="#fff" /></>],
];

function SalesChart() {
  const base = 98;
  return (
    <svg width="100%" height="153" viewBox="0 0 408 153" preserveAspectRatio="xMinYMin meet" fill="#fff" fontSize="9">
      {["200K", "150K", "100K", "50K", "0K"].map((t, i) => (
        <g key={t}>
          <text x="36" y={11 + i * 22.5} textAnchor="end">{t}</text>
          <path d={`M40 ${8.5 + i * 22.5} H404`} stroke="#e9a8f5" strokeDasharray="1 2" opacity=".8" />
        </g>
      ))}
      <text transform="translate(10 54) rotate(-90)" textAnchor="middle" fontSize="8" fontWeight="600">Sum of Sales</text>
      {products.map((p, i) => (
        <g key={i}>
          {series.map((s, k) => (
            <rect key={s.name} x={51.5 + i * 24.9 + k * 6.5} y={base - s.v[i]} width="6" height={s.v[i]} fill={s.color} stroke="#6e5a80" strokeWidth=".6" />
          ))}
          <text transform={`translate(${58 + i * 24.9} 110) rotate(-33)`} textAnchor="end">{p}</text>
        </g>
      ))}
      <text x="223" y="151" textAnchor="middle" fontSize="8" fill="#3a0a55">Product</text>
    </svg>
  );
}

const kpis = [
  ["2.30M", "Sum of Sales", 190, 162],
  ["286.40K", "Sum of Profit", 380, 162],
  ["0.16", "Average of Discount", 580, 162],
];

const pageArrow = (d) => (
  <svg width="6" height="8" viewBox="0 0 6 8" fill="#c8c6c4"><path d={d} /></svg>
);

function FieldPill({ name, c }) {
  return (
    <Pill>
      <PillText>{name}</PillText>
      <IconButton $w={13} $h={16} aria-label={`${name} options`}><Down w={12} c={c} sw={1} /></IconButton>
      <IconButton $w={13} $h={16} aria-label={`Remove ${name}`}>
        <svg width="9" height="9" stroke="#605e5c"><path d="M0.5 0.5 L8.5 8.5 M8.5 0.5 L0.5 8.5" /></svg>
      </IconButton>
    </Pill>
  );
}

export default function App() {
  return (
    <>
      <Global />
      <Root>
        <TitleBar>
          <QuickAccess>
            <IconButton aria-label="Save">
              <svg width="16" height="16" viewBox="0 0 16 16" fill="none" stroke="#d2d0ce" strokeWidth="1.2">
                <path d="M0.6 0.6 H15.4 V15.4 H2.4 L0.6 13.6 Z M3.5 0.6 V7 H12.5 V0.6 M4 15.4 V10.5 H12 V15.4 M6.5 13 V15.4" />
              </svg>
            </IconButton>
            <IconButton aria-label="Undo">
              <svg width="16" height="16" viewBox="0 0 16 16" fill="none" stroke="#e1dfdd" strokeWidth="1.3">
                <path d="M2 0.5 V6.5 H8 M2.2 6.2 C5 1.5 10 0.5 12.5 3 C15 5.5 14 8.5 12 10.5 L7.5 15.3" />
              </svg>
            </IconButton>
            <IconButton aria-label="Redo">
              <svg width="16" height="16" viewBox="0 0 16 16" fill="none" stroke="#6e6c6a" strokeWidth="1.3">
                <path d="M14 0.5 V6.5 H8 M13.8 6.2 C11 1.5 6 0.5 3.5 3 C1 5.5 2 8.5 4 10.5 L8.5 15.3" />
              </svg>
            </IconButton>
            <DocTitle>Untitled - Power BI Desktop</DocTitle>
          </QuickAccess>
          <GlobalSearch>
            <Lens s={17} />
            <GlobalInput placeholder="Search" aria-label="Search" />
          </GlobalSearch>
          <WindowTools>
            <Account>
              ansh bakshi
              <svg width="20" height="20" viewBox="0 0 20 20">
                <circle cx="10" cy="10" r="10" fill="#f3f2f1" />
                <g fill="none" stroke="#1b1a19" strokeWidth="1.5">
                  <circle cx="10" cy="5.8" r="3" />
                  <path d="M4.5 11 H15.5 C15.5 19 4.5 19 4.5 11 Z" />
                </g>
              </svg>
            </Account>
            <IconButton $w={44} $h={34} aria-label="Minimize">
              <svg width="10" height="10" stroke="#fff"><path d="M0 5.5 H10" /></svg>
            </IconButton>
            <IconButton $w={44} $h={34} aria-label="Maximize">
              <svg width="10" height="10" fill="none" stroke="#fff"><path d="M0.5 0.5 H9.5 V9.5 H0.5 Z" /></svg>
            </IconButton>
            <IconButton $w={44} $h={34} aria-label="Close">
              <svg width="11" height="11" stroke="#fff"><path d="M0.5 0.5 L10.5 10.5 M10.5 0.5 L0.5 10.5" /></svg>
            </IconButton>
          </WindowTools>
        </TitleBar>

        <Tabs>
          {tabs.map(([t, w, kind]) => (
            <Tab key={t} $w={w} $strong={!!kind} $context={kind === "ctx"}>
              <TabText $on={kind === "on"}>{t}</TabText>
            </Tab>
          ))}
          <Share>
            <svg width="16" height="14" viewBox="0 0 16 14" fill="none" stroke="#fff" strokeWidth="1.1">
              <path d="M0.6 3.5 V13.4 H12 V10.5 M10 0.8 L15.2 5 L10 9.2 V6.8 C7 6.8 5 7.5 3.2 9.8 C3.5 6 6 3.2 10 3 Z" />
            </svg>
            <ShareText>Share <Down w={10} c="#fff" /></ShareText>
          </Share>
        </Tabs>

        <Ribbon>
          <Group $w={491} $pad="8px 0 0">
            <Gallery>
              <Thumbs>
                {themes.map((colors, i) => (
                  <Thumb key={i} aria-label={`Theme ${i + 1}`}>
                    Aa
                    <ThumbBars>
                      {colors.map((c, k) => <ThumbBar key={k} $h={barHeights[k]} $c={c} />)}
                    </ThumbBars>
                  </Thumb>
                ))}
              </Thumbs>
              <IconButton $w={16} $h={60} aria-label="More themes"><Down w={6} sw={2} /></IconButton>
            </Gallery>
            <GroupName>Themes</GroupName>
          </Group>
          <Group $w={63}>
            <RibbonButton $w={60}>
              <svg width="30" height="32" viewBox="0 0 30 32" fill="none" stroke={ink}>
                <path d="M8.5 3.5 H28.5 M8.5 1 V6 M28.5 1 V6 M3.5 8.5 V28.5 M1 8.5 H6 M1 28.5 H6" />
                <path d="M8.5 8.5 H28.5 V28.5 H8.5 Z" fill="#fff" />
                <path d="M11.5 11.5 H25.5 V14.5 H11.5 Z" fill={grey} stroke="#797775" />
              </svg>
              <span>{"Page\nview"} <InlineCaret viewBox="0 0 10 6" fill="none" stroke={ink} strokeWidth="2"><path d="M1 1 L5 5 L9 1" /></InlineCaret></span>
            </RibbonButton>
            <GroupName>Scale to fit</GroupName>
          </Group>
          <Group $w={58}>
            <RibbonButton $w={56}>
              <svg width="18" height="32" viewBox="0 0 18 32" fill="#fff" stroke={ink}>
                <path d="M0.5 1.5 H16.5 V28.5 H0.5 Z M6 25.5 H11" />
              </svg>
              <span>{"Mobile\nlayout"}</span>
            </RibbonButton>
            <GroupName>Mobile</GroupName>
          </Group>
          <Group $w={123}>
            <Options>
              <Option><Tick id="gridlines" on size={16} />Gridlines</Option>
              <Option><Tick id="snap" on size={16} />Snap to grid</Option>
              <Option><Tick id="lock" size={16} />Lock objects</Option>
            </Options>
            <GroupName>Page options</GroupName>
          </Group>
          <Group $w={282}>
            <RibbonRow>
              <RibbonButton $w={40} $on>
                <svg width="28" height="32" viewBox="0 0 28 32" fill="#fff" stroke={ink}>
                  <path d="M0.5 1.5 H27 V6 L17 16.5 V28.5 H11 V16.5 L0.5 6 Z" />
                </svg>
                <span>Filters</span>
              </RibbonButton>
              <RibbonButton $w={58}>
                <svg width="18" height="32" viewBox="0 0 18 32" fill="#fff" stroke={ink}>
                  <path d="M0.5 1.5 H16.5 V28.5 L8.5 23 L0.5 28.5 Z" />
                </svg>
                <span>Bookmarks</span>
              </RibbonButton>
              <RibbonButton $w={52}>
                <svg width="30" height="32" viewBox="0 0 30 32">
                  <path d="M10.5 1.5 H27.5 V18.5 H10.5 Z" fill="#f7d98b" stroke="#d9731a" />
                  <path d="M0.5 14.5 H18.5 V28.5 H0.5 Z" fill="#fff" stroke={ink} />
                  <path d="M17 11 V27.5 L20.5 24 L23.5 30 L26 28.5 L23 23 H28 Z" fill="#fff" stroke={ink} />
                </svg>
                <span>Selection</span>
              </RibbonButton>
              <RibbonButton $w={68}>
                <svg width="28" height="32" viewBox="0 0 28 32" fill="none" stroke={ink}>
                  <path d="M12 28.5 H0.5 V1.5 H22.5 V14" fill="#fff" />
                  <path d="M5.5 24 V12 H10.5 V24 Z M10.5 24 V6.5 H16 V15" stroke="#605e5c" />
                  <circle cx="20.5" cy="24" r="6.3" fill="#fff" stroke="#2a85c7" strokeWidth="1.5" />
                  <path d="M20.5 20.5 V24.5 H23.5 M18.5 16.5 H22.5 M25.5 18 L27 19.5" stroke="#2a85c7" strokeWidth="1.4" />
                </svg>
                <span>{"Performance\nanalyzer"}</span>
              </RibbonButton>
              <RibbonButton $w={38}>
                <svg width="32" height="32" viewBox="0 0 32 32" fill="none" stroke={ink}>
                  <path d="M16 2 H30 V6 H16 Z" fill={grey} stroke="none" />
                  <path d="M16 1.5 H30 V15 M2.5 15 V28.5 H20 M16 6.5 H30" />
                  <path d="M16 10.5 H26 V14.5 H14 M18 19.5 H6.5 V24.5 H20" stroke="#605e5c" />
                  <path d="M1.5 7 A7 7 0 0 1 14 3.5 M14.5 7 A7 7 0 0 1 2 11 M14.5 0 V4.5 H10 M1 14 V9.5 H6" stroke="#2d9a4b" strokeWidth="1.6" />
                  <path d="M17.5 16.5 H31 V19.5 L26.5 24 V30.5 H22.5 V24 L17.5 19.5 Z" fill="#fff" />
                </svg>
                <span>{"Sync\nslicers"}</span>
              </RibbonButton>
            </RibbonRow>
            <GroupName>Show panes</GroupName>
          </Group>
          <Collapse>
            <IconButton $w={14} aria-label="Collapse ribbon">
              <svg width="8" height="6" viewBox="0 0 8 6" fill="none" stroke={ink} strokeWidth="2"><path d="M0.5 5 L4 1.5 L7.5 5" /></svg>
            </IconButton>
          </Collapse>
        </Ribbon>

        <Work>
          <Rail>
            <RailButton $on aria-label="Report view">
              <svg width="14" height="14" viewBox="0 0 14 14" fill="none" stroke="#111" strokeWidth="1.1">
                <path d="M0.6 0 V13.4 H14 M2.6 11.5 V3.5 H4.6 V11.5 Z M6.4 11.5 V6 H8.4 V11.5 Z M10.4 11.5 V1.5 H12.6 V11.5 Z" />
              </svg>
            </RailButton>
            <RailButton aria-label="Table view">
              <svg width="17" height="16" viewBox="0 0 17 16" fill="none" stroke="#797775">
                <path d="M0.5 0.5 H16 V15.5 H0.5 Z M0.5 2 H16 M0.5 6.5 H16 M0.5 11 H16 M5.5 2.5 V15.5 M11 2.5 V15.5" />
              </svg>
            </RailButton>
            <RailButton aria-label="Model view">
              <svg width="18" height="18" viewBox="0 0 18 18" fill="none" stroke="#797775">
                <path d="M10.5 0.5 H17.5 V7.5 H10.5 Z M10.5 3 H17.5 M0.5 5.5 H7.5 V12.5 H0.5 Z M0.5 8 H7.5 M10.5 10.5 H17.5 V17.5 H10.5 Z M10.5 13 H17.5 M4 5.5 V2 H10.5 M4 12.5 V15 H10.5" />
              </svg>
            </RailButton>
            <RailButton aria-label="DAX query view">
              <svg width="18" height="17" viewBox="0 0 18 17" fill="none" stroke="#797775">
                <path d="M4.5 8.5 V0.5 H10.5 L14.5 4.5 V12 M10.5 0.5 V4.5 H14.5 M16.5 7 V14" />
                <text x="0" y="16" fontSize="7" fontWeight="600" fill="#605e5c" stroke="none">DAX</text>
              </svg>
            </RailButton>
          </Rail>

          <Center>
            <Stage>
              <CanvasArea>
                <Page>
                  <GridDots>
                    <defs>
                      <pattern id="dots" width="57" height="57" patternUnits="userSpaceOnUse">
                        <path d="M0 0.5 H57 M0.5 0 V57" stroke="#2a0a4a" strokeDasharray="1 8.5" />
                      </pattern>
                    </defs>
                    <rect width="100%" height="100%" fill="url(#dots)" />
                  </GridDots>
                  <BackButton aria-label="Back">
                    <svg width="18" height="18" viewBox="0 0 18 18" fill="none" stroke="#62508a" strokeWidth="1.6">
                      <circle cx="9" cy="9" r="8" />
                      <path d="M14 9 H4.5 M8.5 4.8 L4.3 9 L8.5 13.2" />
                    </svg>
                  </BackButton>
                  {kpis.map(([v, n, x, w]) => (
                    <Kpi key={n} $x={x} $y={29} $w={w} $h={86} $bg="rgba(214,0,184,0.34)">
                      <KpiValue>{v}</KpiValue>
                      <KpiName>{n}</KpiName>
                    </Kpi>
                  ))}
                  <VisualTools>
                    <VisualTool aria-label="Filters on visual"><Funnel w={16} h={14} c="#605e5c" sw={1.8} /></VisualTool>
                    <VisualTool aria-label="Focus mode">
                      <svg width="15" height="14" viewBox="0 0 15 14" fill="none" stroke="#797775">
                        <path d="M7 1.5 H0.5 V13 H14 V7 M0.5 8.5 H6 V13 M8 7 L14 1 M10 0.8 H14.2 V5" />
                      </svg>
                    </VisualTool>
                    <VisualTool aria-label="More options"><Dots w={16} r={1.3} /></VisualTool>
                  </VisualTools>
                  <ChartFrame $x={19} $y={133} $w={409} $h={190} $bg="rgba(214,0,184,0.28)">
                    <VisualTitle $h={16} $s={11}>KPI OF SALES ,PRODUCT WISE</VisualTitle>
                    <LegendRow>
                      <b>Region</b>
                      {series.map((s) => <LegendItem key={s.name} $c={s.color}>{s.name}</LegendItem>)}
                    </LegendRow>
                    <SalesChart />
                    <Handles width="411" height="192" viewBox="0 0 411 192" fill="none" stroke="#9b98a0" strokeWidth="3">
                      <path d="M2 10 V2 H10 M401 2 H409 V10 M2 182 V190 H10 M401 190 H409 V182 M200 2 H212 M200 190 H212 M2 90 V102 M409 90 V102" />
                    </Handles>
                  </ChartFrame>
                  <Visual $x={456} $y={124} $w={286} $h={152} $bg="rgba(214,0,184,0.55)">
                    <VisualTitle $h={17} $s={12} $align="center">Customer List</VisualTitle>
                    <TableBody>
                      <CustomerTable>
                        <colgroup><col width="76" /><col width="55" /><col width="80" /><col width="53" /></colgroup>
                        <thead>
                          <tr><th>Contact Name</th><th>City</th><th>Country</th><th>Customer</th></tr>
                        </thead>
                        <tbody>
                          {customers.map((r, i) => <tr key={i}>{r.map((c, k) => <td key={k}>{c}</td>)}</tr>)}
                        </tbody>
                      </CustomerTable>
                      <TableScroll />
                    </TableBody>
                  </Visual>
                </Page>
              </CanvasArea>

              <FilterPane>
                <PaneHead $gap={8} $pad="0 1px 0 12px">
                  <Funnel w={16} h={15} c="#252423" sw={2.4} />
                  <PaneTitle>Filters</PaneTitle>
                  <svg width="13" height="10" viewBox="0 0 13 10" fill="none" stroke={ink} strokeWidth="1.3">
                    <path d="M0.8 5.5 C3 0.2 10 0.2 12.2 5.5" /><circle cx="6.5" cy="6" r="2.2" />
                  </svg>
                  <IconButton $w={30} $h={16} aria-label="Collapse filters"><Chevrons /></IconButton>
                </PaneHead>
                <PaneSearch $h={31} $gap={13} $px={10} $m="7px 12px 4px 8px" $c="#a19f9d">
                  <Lens s={16} />
                  <PaneInput placeholder="Search" aria-label="Search filters" />
                </PaneSearch>
                <FilterBody>
                  <FilterList>
                    <FilterHead>Filters on this visual <Dots w={14} r={0.8} /></FilterHead>
                    {filters.map((f) => <FilterCard key={f}>{f}<br />is (All)</FilterCard>)}
                    <FilterCard $center>Add data fields here</FilterCard>
                  </FilterList>
                  <Bar $w={6} $h={292} $top={8} $r={3} />
                </FilterBody>
              </FilterPane>
            </Stage>
            <PageTabs>
              <ViewSwitch $on $left={10} aria-label="Desktop layout">
                <svg width="20" height="20" viewBox="0 0 20 20" fill="none" stroke="#605e5c" strokeWidth="1.4">
                  <path d="M0.7 4.7 H19.3 V15.3 H0.7 Z M10 15.3 V18.3 M6.5 18.3 H13.5" />
                </svg>
              </ViewSwitch>
              <ViewSwitch $left={21} aria-label="Mobile layout">
                <svg width="14" height="22" viewBox="0 0 14 22" fill="none" stroke="#484644" strokeWidth="1.4">
                  <path d="M0.7 2.7 H12.3 V21.3 H0.7 Z M6 18.5 H7.5" />
                </svg>
              </ViewSwitch>
              <PageArrows>{pageArrow("M5 0 V8 L1 4 Z")}{pageArrow("M1 0 V8 L5 4 Z")}</PageArrows>
              <PageTab>Page 1</PageTab>
              <AddPage aria-label="New page">
                <svg width="12" height="12" stroke="#fff" strokeWidth="3"><path d="M6 0.5 V11.5 M0.5 6 H11.5" /></svg>
              </AddPage>
            </PageTabs>
          </Center>

          <SidePane>
            <PaneHead $pad="0 8px">
              <PaneTitle>Visualizations</PaneTitle>
              <Chevrons />
            </PaneHead>
            <Sub>Build visual</Sub>
            <Modes>
              <Mode $on aria-label="Build visual">
                <svg width="24" height="24" viewBox="0 0 24 24">
                  <path d="M0 0.8 H19" stroke={ink} />
                  <path d="M1 6 H23 V12.5 H1 Z M1 17 H23 V23.5 H1 Z" fill={green} stroke="#252423" strokeWidth="1.4" strokeDasharray="1.5 1" />
                </svg>
              </Mode>
              <Mode aria-label="Format visual">
                <svg width="24" height="24" viewBox="0 0 24 24" fill="none" stroke={ink} strokeWidth="1.2">
                  <path d="M7 19.5 H2 V9.5 H6.5 V19 M6.5 9.5 V1.5 H12.5 V14 M12.5 6.5 H17.5 V9" />
                  <path d="M22.5 8 L13 15.5 L15.5 18 Z" fill="#f3f2f1" />
                  <path d="M13 15.5 C9 15 10 21 5.5 22.5 C12 24.5 16 22 15.5 18" fill="#c8c6c4" />
                </svg>
              </Mode>
              <Mode aria-label="Analytics">
                <svg width="24" height="24" viewBox="0 0 24 24" fill="none" stroke={ink} strokeWidth="1.4">
                  <circle cx="10" cy="10" r="9" />
                  <path d="M1.5 9.5 L6 6.5 L10 9 L18 4" /><path d="M5.5 18 V13 M8.5 19 V11.5 M12 19 V12.5 M15 17 V10" strokeWidth="1.8" />
                  <path d="M17 17 L23.5 23.5" strokeWidth="2.4" />
                </svg>
              </Mode>
            </Modes>
            <Notch>
              <svg width="16" height="9" viewBox="0 0 16 9" fill="none" stroke="#8a8886"><path d="M0 8.5 L8 0.8 L16 8.5" /></svg>
            </Notch>
            <VisualGrid>
              {visuals.map(([name, art]) => (
                <VisualPick key={name} aria-label={name} $on={name === "Clustered column chart"}>
                  <svg width="18" height="18" viewBox="0 0 18 18">{art}</svg>
                </VisualPick>
              ))}
              <VisualPick aria-label="Get more visuals"><Dots w={17} r={1.1} /></VisualPick>
            </VisualGrid>
            <WellArea>
              <Wells>
                <WellName $top={9}>X-axis</WellName>
                <Well $h={37}><FieldPill name="Product" c="#2a85c7" /></Well>
                <WellName $top={11}>Y-axis</WellName>
                <Well $h={30}><FieldPill name="Sum of Sales" c="#b0662a" /></Well>
                <WellName $top={11}>Legend</WellName>
                <Well $h={30}><FieldPill name="Region" c="#b0662a" /></Well>
              </Wells>
              <Bar $w={6} $h={67} $top={2} $r={3} />
            </WellArea>
          </SidePane>

          <SidePane>
            <PaneHead $pad="0 8px">
              <PaneTitle>Data</PaneTitle>
              <Chevrons />
            </PaneHead>
            <PaneSearch $h={27} $gap={7} $px={7} $m="7px 4px 0" $c="#605e5c">
              <Lens s={14} />
              <PaneInput placeholder="Search" aria-label="Search data" />
            </PaneSearch>
            <DataBody>
              <Fields>
                {fields.map(([name, kind, on]) => (
                  <Field key={name}>
                    {kind === "date" ? (
                      <Expander aria-label={`Expand ${name}`}>
                        <svg width="8" height="14" viewBox="0 0 8 14" fill="none" stroke="#605e5c"><path d="M1 1 L7 7 L1 13" /></svg>
                      </Expander>
                    ) : <span />}
                    <Tick id={`f-${name}`} on={on} size={12} solid />
                    {kind === "sum" ? <Sigma /> : kind === "date" ? (
                      <svg width="12" height="12" viewBox="0 0 12 12" fill="none" stroke={ink} strokeWidth="1.1">
                        <rect x="0.6" y="0.6" width="10.8" height="10.8" rx="1.5" />
                        <path d="M0.6 3.6 H11.4" /><path d="M3 6.2 H9.5 M3 8.7 H7" strokeDasharray="1.4 1.1" />
                      </svg>
                    ) : <span />}
                    <FieldName htmlFor={`f-${name}`}>{name}</FieldName>
                  </Field>
                ))}
              </Fields>
              <Bar $w={8} $h={430} $top={33} $c="#c8c8c8" />
            </DataBody>
          </SidePane>
        </Work>

        <Status>
          <span>Page 1 of 1</span>
          <StatusRight>
            <Zoom>
              <b>-</b>
              <ZoomRange type="range" aria-label="Zoom" min="0" max="100" defaultValue="27" />
              <IconButton $w={12} aria-label="Zoom in">
                <svg width="8" height="8" stroke="#484644"><path d="M4 0 V8 M0 4 H8" /></svg>
              </IconButton>
            </Zoom>
            <ZoomValue>59%</ZoomValue>
            <IconButton aria-label="Fit to page">
              <svg width="16" height="12" viewBox="0 0 16 12" fill="none" stroke="#605e5c">
                <path d="M0.5 0.5 H15.5 V11.5 H0.5 Z M3 5 V3 H5 M11 3 H13 V5 M3 7 V9 H5 M11 9 H13 V7" />
              </svg>
            </IconButton>
            <StatusLink href="#update">Update available (click to download)</StatusLink>
          </StatusRight>
        </Status>

        <Taskbar>
          <Start aria-label="Start">
            <svg width="16" height="16" viewBox="0 0 16 16" fill="#fff">
              <path d="M0 2.2 L7 1.2 V7.5 H0 Z M8 1 L16 0 V7.5 H8 Z M0 8.5 H7 V14.8 L0 13.8 Z M8 8.5 H16 V16 L8 15 Z" />
            </svg>
          </Start>
          <TaskSearch>
            <Lens s={16} c="#1b1a19" />
            <TaskInput placeholder="Type here to search" aria-label="Type here to search" />
            <svg width="78" height="38" viewBox="0 0 78 38">
              <path d="M0 38 L14 25 H72 L78 31 V38 Z" fill="#e2b98a" />
              <path d="M0 38 L2 34 H78 V38 Z" fill="#c99a68" />
              <path d="M11 15 L25 11 L38 12 L36 28 L24 28 L16 33 Z" fill="#3f9a4f" />
              <path d="M12 13 L24 11 L25 27 L15 31 Z" fill="#f7f2e4" /><path d="M24 11 L36 11 L37 26 L25 27 Z" fill="#fffaf0" />
              <path d="M15 17 L22 15 M16 21 L23 19 M27 17 L34 16 M27 21 L34 20" stroke="#b8b09a" />
              <path d="M29 20 L37 7 L41 9 L33 22 L29 23 Z" fill="#f5a030" /><path d="M37 7 L39 4 L43 6 L41 9 Z" fill="#e35a4a" />
              <path d="M53 5 Q58 -1 63 5" fill="none" stroke="#0a5fc0" strokeWidth="2" />
              <rect x="48" y="4" width="20" height="29" rx="9" fill="#2091f0" />
              <rect x="48" y="16" width="20" height="17" rx="4" fill="#0c6ad8" />
              <rect x="51" y="20" width="14" height="10" rx="3" fill="#2b40b8" />
              <path d="M50 14 H66" stroke="#64c0ff" strokeWidth="1.5" />
            </svg>
          </TaskSearch>
          <Apps>
            <AppButton $w={48} aria-label="Task view">
              <svg width="18" height="18" viewBox="0 0 18 18" fill="none" stroke="#fff" strokeWidth="1.2">
                <path d="M1 4.5 H12 V13.5 H1 Z M1 0 V2 H12 V0 M1 18 V16 H12 V18 M15.5 0 V4 M15.5 8.5 V18 M14 5 h3 v3 h-3 Z" />
              </svg>
            </AppButton>
            {apps.map(([name, run, art, on]) => (
              <AppButton key={name} aria-label={name} $run={run} $on={on}>
                <svg width="24" height="24" viewBox="0 0 24 24">{art}</svg>
              </AppButton>
            ))}
          </Apps>
          <Tray>
            <Weather>
              <svg width="26" height="26" viewBox="0 0 26 26">
                <path d="M3 24 C-1 22 1 16 5 16.5 C6 10 15 9 17 15 C23 14 26 21 21 24 Z" fill="#c3dcf8" />
                <path d="M5 24 C2 22 5 19 8 20 C12 16 17 20 21 24 Z" fill="#8db6ea" />
                <circle cx="19" cy="7" r="6.5" fill="#c42b1c" />
                <text x="19" y="11" fontSize="10" textAnchor="middle" fill="#fff">1</text>
              </svg>
              33°C
            </Weather>
            <IconButton aria-label="Hidden icons">
              <svg width="12" height="8" fill="none" stroke="#fff" strokeWidth="1.3"><path d="M0.5 7 L6 1 L11.5 7" /></svg>
            </IconButton>
            <IconButton aria-label="Meet now">
              <svg width="14" height="16" viewBox="0 0 14 16" fill="none" stroke="#fff"><path d="M2.5 4.5 H8.5 V11.5 H2.5 Z M8.5 7 L11.5 5 V11 L8.5 9 M3 2 C5 0.5 8 0.5 10 2 M3 14 C5 15.5 8 15.5 10 14" /></svg>
            </IconButton>
            <IconButton aria-label="Network">
              <svg width="16" height="16" viewBox="0 0 16 16" fill="none" stroke="#fff"><circle cx="7.5" cy="7.5" r="7" /><ellipse cx="7.5" cy="7.5" rx="3" ry="7" /><path d="M1 5 H14 M1 10 H14" /><circle cx="12" cy="12" r="3.5" fill="#1f1e1e" /><path d="M9.5 9.5 L14.5 14.5" /></svg>
            </IconButton>
            <IconButton aria-label="Battery">
              <svg width="16" height="14" viewBox="0 0 16 14" fill="none" stroke="#fff"><path d="M4 4.5 H14 V11.5 H3.5 V8 M15.5 6.5 V9.5 M1.5 0 V2.5 M4.5 0 V2.5 M0.5 2.5 H5.5 V5 L3 6.5 L0.5 5 Z M3 6.5 V9" /><path d="M6 6.5 H12 V9.5 H6 Z" fill="#fff" /></svg>
            </IconButton>
            <IconButton $w={18} aria-label="Volume">
              <svg width="17" height="14" viewBox="0 0 17 14" fill="none" stroke="#fff"><path d="M0.5 5 H3 L6 2 V12 L3 9 H0.5 Z M8.5 5 C9.5 6 9.5 8 8.5 9 M11 3 C13 5 13 9 11 11 M13.5 1 C16.8 4 16.8 10 13.5 13" /></svg>
            </IconButton>
            <IconButton $w={20} $h={16} aria-label="Windows Ink">
              <svg width="16" height="16" viewBox="0 0 16 16" fill="none" stroke="#fff"><path d="M11 1 L13 3 L7 11 L4.5 12 L5 9 Z M13 4 C16 5 14 7 11 8 M4.5 12 C1 9 0 15 4 15 C8 15 7 9 10 10 C12 11 9 13 9 14" /></svg>
            </IconButton>
            <TrayText $w={28}>ENG<br />IN</TrayText>
            <TrayText $w={58}>2:34 PM<br />9/22/2024</TrayText>
            <IconButton $w={28} $h={18} aria-label="Notifications">
              <svg width="16" height="16" viewBox="0 0 16 16"><path d="M0 0 H16 V12.5 H10.5 L8 16 L5.5 12.5 H0 Z" fill="#fff" /><path d="M3 3.5 H13 M3 6.5 H13 M3 9.5 H10" stroke="#1f1e1e" /></svg>
            </IconButton>
            <ShowDesktop aria-label="Show desktop" />
          </Tray>
        </Taskbar>

        <Watermark>
          <WatermarkHead>Activate Windows</WatermarkHead>
          <p>Go to Settings to activate Windows.</p>
        </Watermark>
      </Root>
    </>
  );
}
